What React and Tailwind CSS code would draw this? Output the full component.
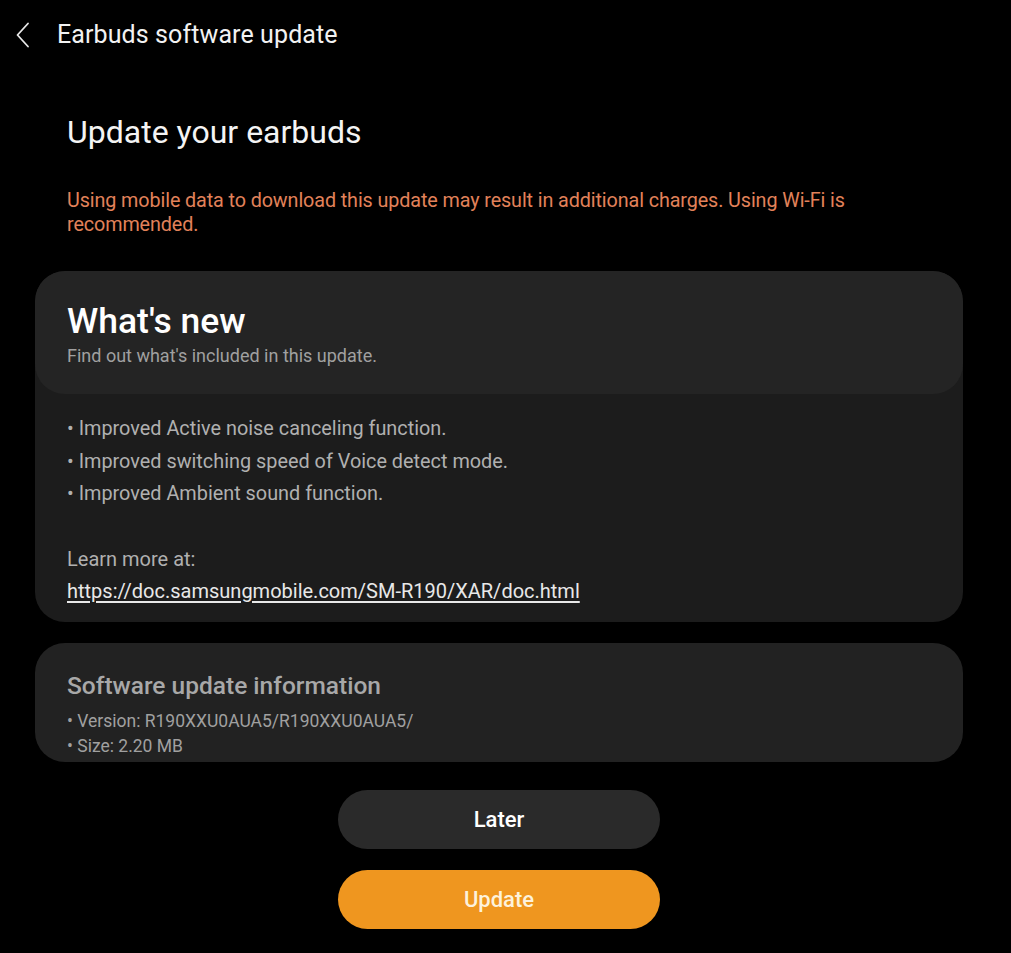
import React from "react";

const bullets = [
  "Improved Active noise canceling function.",
  "Improved switching speed of Voice detect mode.",
  "Improved Ambient sound function.",
];

const App = () => {
  return (
    <div
      className="min-h-screen w-[1011px] h-[953px] bg-black text-white overflow-hidden"
      style={{ fontFamily: "Roboto, 'Liberation Sans', sans-serif" }}
    >
      {/* Top bar */}
      <div className="flex items-center h-[70px] pl-[15px]">
        <svg
          width="16"
          height="26"
          viewBox="0 0 16 26"
          fill="none"
          stroke="#e8e8e8"
          strokeWidth="1.8"
          strokeLinecap="round"
          strokeLinejoin="round"
        >
          <path d="M13 1.5 L2.5 13 L13 24.5" />
        </svg>
        <h1 className="ml-[26px] text-[25px] text-[#f2f2f2] tracking-[0.1px]">Earbuds software update</h1>
      </div>

      <div className="px-[35px] w-[963px] box-content">
        <h2 className="ml-[32px] mt-[40px] text-[32px] leading-[44px] text-[#f4f4f4]">Update your earbuds</h2>

        <p className="ml-[32px] mt-[35px] mr-[60px] text-[19.75px] leading-[24px] tracking-[-0.1px] text-[#e2825a]">
          Using mobile data to download this update may result in additional charges. Using Wi-Fi is recommended.
        </p>

        {/* What's new card */}
        <div className="mt-[34px] w-[928px] bg-[#1c1c1c] rounded-[30px] overflow-hidden">
          <div className="bg-[#242424] rounded-[30px] h-[123px] px-[32px] pt-[28px]">
            <h3 className="text-[35.5px] leading-[44px] font-medium text-white">What's new</h3>
            <p className="text-[18px] leading-[24px] text-[#a0a0a0] mt-[1px]">Find out what's included in this update.</p>
          </div>
          <div className="px-[32px] pt-[19px] pb-[15px]">
            <ul className="flex flex-col">
              {bullets.map((b) => (
                <li key={b} className="text-[19.85px] leading-[32.5px] text-[#b0b0b0]">
                  {"\u2022 "}
                  {b}
                </li>
              ))}
            </ul>
            <p className="mt-[32px] text-[20px] leading-[32px] text-[#b0b0b0]">Learn more at:</p>
            <a className="block text-[20px] leading-[32px] text-[#e8e8e8] underline underline-offset-[3px]">
              https://doc.samsungmobile.com/SM-R190/XAR/doc.html
            </a>
          </div>
        </div>

        {/* Software update info card */}
        <div className="mt-[21px] w-[928px] h-[119px] bg-[#222222] rounded-[30px] px-[32px] pt-[27px]">
          <h3 className="text-[24.5px] leading-[32px] font-medium text-[#a8a8a8]">Software update information</h3>
          <p className="mt-[7px] text-[17.5px] leading-[25px] text-[#a0a0a0]">{"\u2022 "}Version: R190XXU0AUA5/R190XXU0AUA5/</p>
          <p className="text-[17.5px] leading-[25px] text-[#a0a0a0]">{"\u2022 "}Size: 2.20 MB</p>
        </div>

        {/* Buttons */}
        <div className="flex flex-col items-center gap-[21px] mt-[28px] w-[928px]">
          <button className="w-[322px] h-[59px] rounded-full bg-[#2a2a2a] text-[22px] font-medium text-white">
            Later
          </button>
          <button className="w-[322px] h-[59px] rounded-full bg-[#ef961f] text-[22px] font-medium text-[#fdf2dc]">
            Update
          </button>
        </div>
      </div>
    </div>
  );
};

export default App;
